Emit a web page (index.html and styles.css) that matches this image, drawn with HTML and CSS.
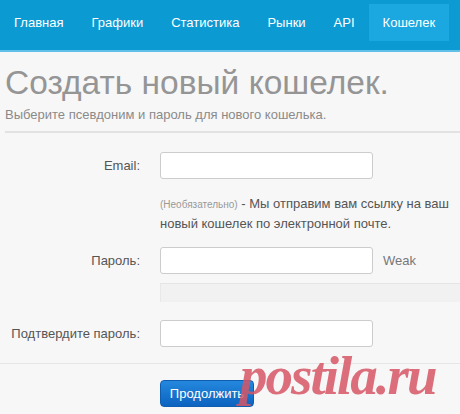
FILE: index.html
```html
<!DOCTYPE html>
<html lang="ru">
<head>
    <meta charset="UTF-8">
    <title>Создать новый кошелек</title>
    <meta name="viewport" content="width=device-width, initial-scale=1">
    <link rel="stylesheet" href="styles.css">
</head>
<body>
    <div class="navbar">
        <a class="nav-item" href="#">Главная</a>
        <a class="nav-item" href="#">Графики</a>
        <a class="nav-item" href="#">Статистика</a>
        <a class="nav-item" href="#">Рынки</a>
        <a class="nav-item" href="#">API</a>
        <a class="nav-item active" href="#">Кошелек</a>
    </div>
    <div class="page">
        <h1>Создать новый кошелек.</h1>
        <p class="lead">Выберите псевдоним и пароль для нового кошелька.</p>
        <form class="wallet-form">
            <div class="row">
                <label for="email">Email:</label>
                <input type="text" id="email">
            </div>
            <div class="row help-row">
                <span></span>
                <p class="help"><span class="optional">(Необязательно)</span> - Мы отправим вам ссылку на ваш новый кошелек по электронной почте.</p>
            </div>
            <div class="row">
                <label for="password">Пароль:</label>
                <div class="with-note">
                    <input type="password" id="password">
                    <span class="strength">Weak</span>
                </div>
            </div>
            <div class="row meter-row">
                <span></span>
                <div class="meter"></div>
            </div>
            <div class="row">
                <label for="confirm">Подтвердите пароль:</label>
                <input type="password" id="confirm">
            </div>
            <div class="actions">
                <button type="submit">Продолжить</button>
            </div>
        </form>
        <div class="watermark">postila.ru</div>
    </div>
</body>
</html>
```

FILE: styles.css
```css
body { margin: 0; font-family: "Liberation Sans", Arial, sans-serif; background: #f7f7f7; color: #555; }
.navbar { display: flex; height: 46px; padding-top: 4px; background: #0c9ad2; border-bottom: 2px solid #62c1e9; }
.nav-item { display: block; height: 37px; line-height: 37px; padding: 0 14px; color: #fff; font-size: 13px; text-decoration: none; }
.nav-item.active { background: #1ba7e0; }

.page { position: relative; padding: 11px 0 0 5px; overflow: hidden; }
h1 { margin: 0; font-size: 33.5px; line-height: 40px; font-weight: normal; color: #959595; }
.lead { margin: 3px 0 0; padding-bottom: 7px; font-size: 13px; line-height: 18px; color: #8a8a8a; border-bottom: 2px solid #e2e2e2; }

.wallet-form { padding-top: 19px; }
.row { display: grid; grid-template-columns: 135px 1fr; column-gap: 20px; align-items: center; margin-bottom: 16px; }
.row label { text-align: right; font-size: 13px; color: #555; }
input[type="text"], input[type="password"] {
    box-sizing: border-box; width: 213px; height: 27px; margin: 0; padding: 4px 6px;
    border: 1px solid #ccc; border-radius: 3px; background: #fff; font-size: 13px;
}
.help-row { margin: -4px 0 14px; }
.help { margin: 0; padding-top: 3px; font-size: 13px; line-height: 19px; color: #555; }
.help .optional { font-size: 10px; color: #999; }
.with-note { display: flex; align-items: center; }
.strength { margin-left: 10px; font-size: 13px; color: #777; }
.meter-row { margin-bottom: 18px; }
.meter { height: 18px; background: #f1f1f1; border-top: 1px solid #e4e4e4; border-left: 1px solid #e8e8e8; margin-top: -7px; }

.actions { border-top: 1px solid #e6e6e6; margin: 0 0 0 -5px; padding: 16px 0 10px 160px; }
button {
    width: 94px; height: 27px; border: 1px solid #0d5db1; border-radius: 4px; cursor: pointer;
    background: linear-gradient(#2488dd, #0c63c0); color: #fff; font-family: "Liberation Sans", Arial, sans-serif; font-size: 13px;
}

.watermark {
    position: absolute; left: 240px; top: 297px;
    font-family: "Liberation Serif", serif; font-style: italic; font-weight: bold;
    font-size: 55px; line-height: 54px; color: rgba(214, 86, 100, 0.85); letter-spacing: -2px;
}
```
